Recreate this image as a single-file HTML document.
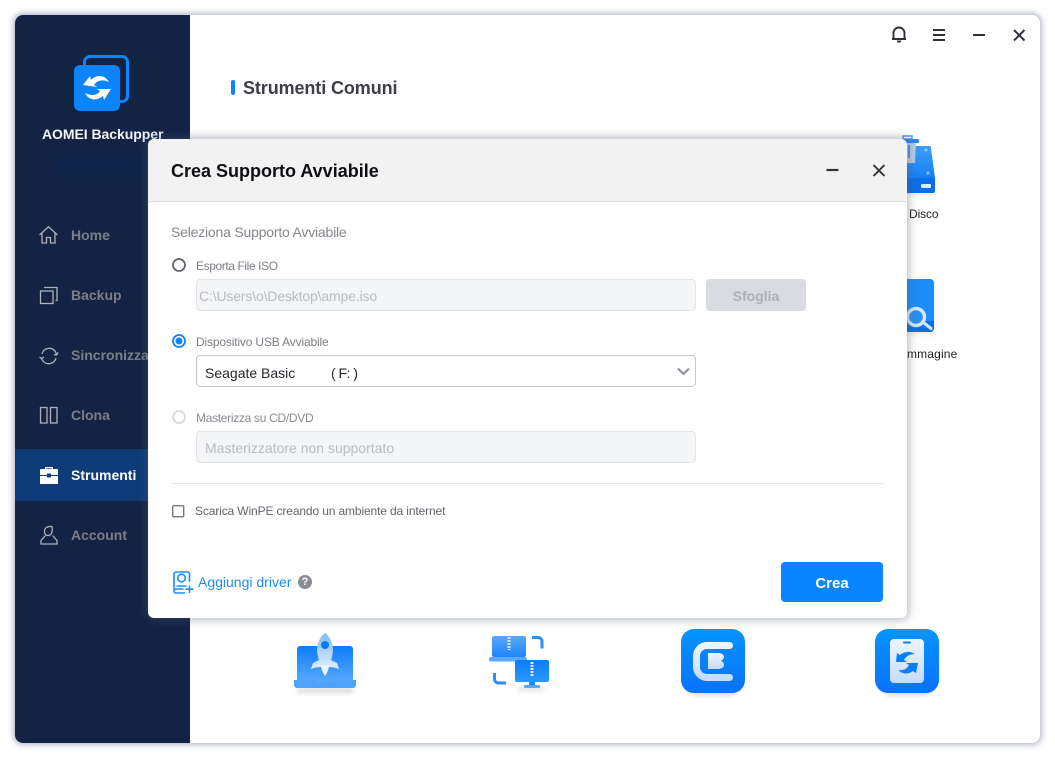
<!DOCTYPE html>
<html lang="it">
<head>
<meta charset="utf-8">
<title>AOMEI Backupper</title>
<style>
html,body{margin:0;padding:0;width:1055px;height:758px;overflow:hidden;background:#fff;font-family:"Liberation Sans","Noto Sans CJK SC",sans-serif}
*{box-sizing:border-box}
.a{position:absolute;white-space:nowrap}
#win{position:absolute;left:15px;top:15px;width:1025px;height:728px;background:#fff;border-radius:8px;box-shadow:0 0 6px 2px rgba(120,130,155,.55);overflow:hidden}
#side{position:absolute;left:15px;top:15px;width:175px;height:728px;background:#132344;border-radius:8px 0 0 8px}
.nav{position:absolute;left:71px;font-size:14px;font-weight:bold;color:#7b8088;line-height:18px}
#act{position:absolute;left:15px;top:449px;width:175px;height:52px;background:#0d3c78}
#dlg{position:absolute;left:148px;top:139px;width:759px;height:479px;background:#fff;border-radius:6px;box-shadow:0 0 9px 2px rgba(80,90,115,.42)}
#dh{position:absolute;left:0;top:0;width:759px;height:63px;background:#f2f2f2;border-bottom:1px solid #dcdcdc;border-radius:6px 6px 0 0}
.lab{font-size:12px;color:#7d7f85;line-height:16px}
.inp{position:absolute;left:196px;width:500px;height:32px;background:#f4f5f6;border:1px solid #e2e4e7;border-radius:4px;font-size:14px;color:#b9bcc2;line-height:32px}
svg{position:absolute;overflow:visible}
</style>
</head>
<body>
<div id="win"></div>
<div id="side"></div>
<div id="act"></div>

<svg style="left:70px;top:52px" width="64" height="62" viewBox="0 0 64 62">
<path d="M14.500 14V10a5.500 5.500 0 0 1 5.500-5.500h32a5.500 5.500 0 0 1 5.500 5.500v34a5.500 5.500 0 0 1-5.500 5.500h-4" fill="none" stroke="#0a84ff" stroke-width="3"/>
<rect x="4" y="13" width="46" height="46" rx="6" fill="#0a84ff"/>
<path d="M13 33L20 24l1 4c6-6 14-5 18 2-6-3-12-2-15 3l3 2z" fill="#fff"/>
<path d="M41 37L34 48l-1-4c-6 5-14 5-18-3 6 3 12 3 15-2l-3-2z" fill="#fff"/>
</svg>
<div class="a" style="left:42px;top:125px;font-size:14px;font-weight:bold;color:#f2f5fa;line-height:18px;letter-spacing:-.05px">AOMEI Backupper</div>
<div class="a" style="left:55px;top:154px;width:90px;height:24px;background:#0f2549;border-radius:12px;filter:blur(3px)"></div>

<svg style="left:39px;top:226px" width="20" height="18" viewBox="0 0 20 18" fill="none" stroke="#aeb2b9" stroke-width="1.300"><path d="M.5 9L9.500 .8 18.500 9M3 7v10h4.500v-5.500h4V17H16V7"/></svg>
<div class="nav" style="top:226px">Home</div>
<svg style="left:39px;top:286px" width="20" height="20" viewBox="0 0 20 20" fill="none" stroke="#aeb2b9" stroke-width="1.300"><rect x="1.500" y="5" width="12.500" height="12.500"/><path d="M5 1.500h13v13h-1.500"/></svg>
<div class="nav" style="top:286px">Backup</div>
<svg style="left:39px;top:346px" width="20" height="20" viewBox="0 0 20 20" fill="none" stroke="#aeb2b9" stroke-width="1.300"><path d="M3 8a7.500 7.500 0 0 1 13-3l1.500 3M17 12a7.500 7.500 0 0 1-13 3l-2-3"/><path d="M0.500 11l2 1.500 2.500-1.500M15 8.500l2.500.5 1.500-2.500"/></svg>
<div class="nav" style="top:346px;width:78px;overflow:hidden">Sincronizza</div>
<svg style="left:39px;top:406px" width="20" height="20" viewBox="0 0 20 20" fill="none" stroke="#aeb2b9" stroke-width="1.300"><rect x="1.500" y="1.500" width="6.500" height="15.500"/><rect x="11.500" y="1.500" width="6.500" height="15.500"/></svg>
<div class="nav" style="top:406px">Clona</div>
<svg style="left:39px;top:466px" width="20" height="18" viewBox="0 0 20 18"><path d="M6 3V1h8v2h-1.500V2.300h-5V3z" fill="#fff"/><path d="M2 3h16a1 1 0 0 1 1 1v5H1V4a1 1 0 0 1 1-1z" fill="#fff"/><rect x="1" y="10" width="18" height="8" fill="#fff"/><rect x="8" y="7.500" width="4" height="4" fill="#0d3c78"/></svg>
<div class="nav" style="top:466px;color:#fff">Strumenti</div>
<svg style="left:39px;top:525px" width="20" height="20" viewBox="0 0 20 20" fill="none" stroke="#aeb2b9" stroke-width="1.300"><path d="M5.500 6.500c0-3.500 2.500-5.500 7.500-5 .8 4.500-.2 8.500-3.500 9-2.500.3-4-1.500-4-4zM6.500 10.500L2 15.500V19h16v-3.500l-4.500-5"/></svg>
<div class="nav" style="top:526px">Account</div>

<div class="a" style="left:231px;top:80px;width:4px;height:15px;background:#0a84ff;border-radius:2px"></div>
<div class="a" style="left:243px;top:77px;font-size:18px;font-weight:bold;color:#3c3f45;line-height:23px;letter-spacing:-.1px">Strumenti Comuni</div>

<svg style="left:890px;top:25px" width="18" height="18" viewBox="0 0 18 18" fill="none" stroke="#2e3238" stroke-width="1.900"><path d="M3.500 13.500V8a5.500 5.500 0 0 1 11 0v5.500M2 14h14"/><path d="M7 16.500h4"/></svg>
<svg style="left:932px;top:28px" width="14" height="14" viewBox="0 0 14 14" stroke="#2e3238" stroke-width="2"><path d="M1 2h12M1 7h12M1 12h12"/></svg>
<svg style="left:973px;top:28px" width="14" height="14" viewBox="0 0 14 14" stroke="#2e3238" stroke-width="2"><path d="M0 7h12"/></svg>
<svg style="left:1012px;top:28px" width="14" height="14" viewBox="0 0 14 14" stroke="#2e3238" stroke-width="2"><path d="M2 2l10.500 10.500M12.500 2L2 12.500"/></svg>

<svg style="left:895px;top:134px" width="45" height="62" viewBox="0 0 45 62">
<defs>
<linearGradient id="gd" x1="0" y1="0" x2="0" y2="1"><stop offset="0" stop-color="#3f9cfa"/><stop offset="1" stop-color="#1681f5"/></linearGradient>
<linearGradient id="g1" x1="0" y1="0" x2="0" y2="1"><stop offset="0" stop-color="#0d7cfb"/><stop offset="1" stop-color="#58a9fb"/></linearGradient>
<linearGradient id="g2" x1="0" y1="0" x2="0" y2="1"><stop offset="0" stop-color="#7db9fb"/><stop offset="1" stop-color="#e1eefc"/></linearGradient>
<linearGradient id="g3" x1="0" y1="0" x2="0" y2="1"><stop offset="0" stop-color="#0694ff"/><stop offset="1" stop-color="#0a72fb"/></linearGradient>
<linearGradient id="g4" x1="0" y1="0" x2="0" y2="1"><stop offset="0" stop-color="#eef5fe"/><stop offset="1" stop-color="#c5dcfb"/></linearGradient>
<linearGradient id="g5" x1="0" y1="0" x2="0" y2="1"><stop offset="0" stop-color="#5aa8fb"/><stop offset="1" stop-color="#1e85f9"/></linearGradient>
<linearGradient id="g6" x1="0" y1="0" x2="0" y2="1"><stop offset="0" stop-color="#0d7cfb"/><stop offset="1" stop-color="#2a98ff"/></linearGradient>
</defs>
<rect x="6" y="50" width="33" height="11" fill="#000" opacity=".07" style="filter:blur(2px)"/>
<path d="M8 12h26a2 2 0 0 1 2 2l4 30H2z" fill="url(#gd)"/>
<circle cx="31" cy="16" r="1.500" fill="#8cc4fb"/><circle cx="33" cy="39" r="1.500" fill="#8cc4fb"/>
<path d="M8 2h9v3H8z" fill="none" stroke="#4d9cf2" stroke-width="1.500"/>
<rect x="5" y="5" width="19" height="4" rx="1" fill="#2f86ee"/>
<path d="M7 9h14l-1 20H9z" fill="#b7cbe6"/>
<rect x="13" y="11" width="2" height="13" fill="#4d93e2"/>
<path d="M0 44h40v13a2 2 0 0 1-2 2H0z" fill="#0a6fe6"/>
<rect x="26" y="50" width="10" height="4" rx="1" fill="#dcebff"/>
</svg>
<div class="a" style="left:909px;top:206px;font-size:12px;color:#222;line-height:16px;letter-spacing:-.1px">Disco</div>

<svg style="left:907px;top:279px" width="30" height="56" viewBox="0 0 30 56">
<rect x="0" y="4" width="27" height="52" fill="#000" opacity=".07" style="filter:blur(2px)"/>
<path d="M0 0h23a4 4 0 0 1 4 4v45a4 4 0 0 1-4 4H0z" fill="#1c8cf8"/>
<path d="M0 42h27v7a4 4 0 0 1-4 4H0z" fill="#0a6fe0"/>
<circle cx="9" cy="38" r="8.500" fill="#2a8ff5" stroke="#d4e6fb" stroke-width="3.500"/>
<path d="M17 44l7 5.500" stroke="#d4e6fb" stroke-width="3.200" stroke-linecap="round"/>
</svg>
<div class="a" style="left:907px;top:346px;font-size:12px;color:#222;line-height:16px;letter-spacing:.15px">mmagine</div>

<svg style="left:292px;top:632px" width="66" height="62" viewBox="0 0 66 62">
<rect x="5" y="56" width="56" height="5" fill="#000" opacity=".14" style="filter:blur(2px)"/>
<rect x="5" y="14" width="56" height="36" rx="3" fill="url(#g1)"/>
<path d="M2 48h21c1 2 2 2 4 2h12c2 0 3 0 4-2h21v5a3 3 0 0 1-3 3H5a3 3 0 0 1-3-3z" fill="#4fa2fa"/>
<path d="M33 1c5 4 8 10 8 17 0 3-1 7-2 10l6 3 2 6c-4-2-9-2-14-2s-10 0-14 2l2-6 6-3c-1-3-2-7-2-10 0-7 3-13 8-17z" fill="url(#g2)"/>
<circle cx="33" cy="13" r="4" fill="#0d7cfb"/>
<path d="M29 33h8c0 4-2 8-4 11-2-3-4-7-4-11z" fill="#eef4fc"/>
</svg>

<svg style="left:488px;top:634px" width="64" height="58" viewBox="0 0 64 58">
<rect x="30" y="52" width="26" height="5" fill="#000" opacity=".1" style="filter:blur(2px)"/>
<rect x="4" y="2" width="34" height="21" rx="2" fill="url(#g5)"/>
<rect x="1" y="23" width="38" height="4.500" rx="2" fill="#5aa8fb"/>
<path d="M21 3v13" stroke="#cfe3fb" stroke-width="3" stroke-dasharray="2 1"/>
<path d="M44 3.500h6a4 4 0 0 1 4 4v7" fill="none" stroke="#2f8df8" stroke-width="3"/>
<path d="M6.500 39v6a4 4 0 0 0 4 4H18" fill="none" stroke="#2f8df8" stroke-width="3"/>
<rect x="27" y="26" width="34" height="22" rx="2" fill="url(#g6)"/>
<rect x="41" y="48" width="6" height="3" fill="#1f85f8"/>
<rect x="36" y="51" width="16" height="3" rx="1" fill="#5aa8fb"/>
<path d="M44 28v15" stroke="#e2eefc" stroke-width="3" stroke-dasharray="2 1"/>
</svg>

<svg style="left:681px;top:629px" width="64" height="68" viewBox="0 0 64 68">
<rect x="4" y="10" width="56" height="57" rx="12" fill="#000" opacity=".12" style="filter:blur(2px)"/>
<rect width="64" height="64" rx="13" fill="url(#g3)"/>
<path d="M48.500 16.500H26a10.500 10.500 0 0 0-10.500 10.500v11A10.500 10.500 0 0 0 26 48.500h22.500" fill="none" stroke="url(#g4)" stroke-width="7" stroke-linecap="round"/>
<path d="M27 24h10c4 0 6 2 6 4 0 2-2 3-3 4 2 1 3 2 3 4 0 2-2 4-6 4H27z" fill="url(#g4)"/>
</svg>

<svg style="left:875px;top:629px" width="64" height="68" viewBox="0 0 64 68">
<rect x="4" y="10" width="56" height="57" rx="12" fill="#000" opacity=".12" style="filter:blur(2px)"/>
<rect width="64" height="64" rx="13" fill="url(#g3)"/>
<rect x="15" y="10" width="34" height="44" rx="4" fill="url(#g4)"/>
<rect x="28" y="12.500" width="8" height="2" rx="1" fill="#0d7cfb"/>
<path d="M21 33l1-9 3 2c5-4 10-4 15-1-5 0-9 2-11 6l3 2zM43 34l-2 10-3-2c-5 4-11 3-15-1 5 1 9-1 11-5l-3-2z" fill="#0d7cfb"/>
</svg>

<div id="dlg">
<div id="dh"></div>
<div class="a" style="left:23px;top:20px;font-size:18px;font-weight:bold;color:#0d0f14;line-height:24px">Crea Supporto Avviabile</div>
<svg style="left:678px;top:25px" width="14" height="14" viewBox="0 0 14 14" stroke="#2e3238" stroke-width="2.200"><path d="M.5 6h12"/></svg>
<svg style="left:724px;top:25px" width="14" height="14" viewBox="0 0 14 14" stroke="#2e3238" stroke-width="1.900"><path d="M1.500 1L12.500 12M12.500 1L1.500 12"/></svg>
</div>

<div class="a" style="left:171px;top:224px;font-size:14px;color:#85878d;line-height:17px;letter-spacing:-.2px">Seleziona Supporto Avviabile</div>

<svg style="left:172px;top:258px" width="15" height="15"><circle cx="7" cy="7" r="6" fill="#fff" stroke="#5d6068" stroke-width="1.700"/></svg>
<div class="a lab" style="left:196px;top:258px;letter-spacing:-.4px">Esporta File ISO</div>
<div class="inp" style="top:279px;padding-left:2px;letter-spacing:-.15px">C:\Users\o\Desktop\ampe.iso</div>
<div class="a" style="left:706px;top:279px;width:100px;height:32px;background:#d8dce1;border-radius:4px;text-align:center;font-size:14px;font-weight:bold;color:#acb0b6;line-height:34px">Sfoglia</div>

<svg style="left:172px;top:334px" width="15" height="15"><circle cx="7" cy="7" r="6" fill="#fff" stroke="#0a84ff" stroke-width="1.700"/><circle cx="7" cy="7" r="3.500" fill="#0a84ff"/></svg>
<div class="a lab" style="left:196px;top:334px;letter-spacing:-.16px">Dispositivo USB Avviabile</div>
<div class="inp" style="top:355px;background:#fff;border-color:#c4c7cc;color:#26282d;padding-left:8px;line-height:34px">Seagate Basic<span style="position:absolute;left:134px;letter-spacing:-.5px">( F: )</span></div>
<svg style="left:677px;top:367px" width="13" height="9" viewBox="0 0 13 9" fill="none" stroke="#8a8e95" stroke-width="2"><path d="M1 1.500l5.500 5.500L12 1.500"/></svg>

<svg style="left:172px;top:410px" width="15" height="15"><circle cx="7" cy="7" r="6" fill="#fff" stroke="#d6d8dc" stroke-width="1.700"/></svg>
<div class="a lab" style="left:196px;top:410px;color:#8a8c92;letter-spacing:-.3px">Masterizza su CD/DVD</div>
<div class="inp" style="top:431px;padding-left:8px">Masterizzatore non supportato</div>

<div class="a" style="left:171px;top:483px;width:712px;height:1px;background:#e6e7e9"></div>

<svg style="left:172px;top:505px" width="13" height="13"><rect x=".75" y=".75" width="11" height="11" rx="1" fill="#fff" stroke="#6a6d74" stroke-width="1.300"/></svg>
<div class="a lab" style="left:195px;top:503px;color:#62656b;letter-spacing:-.13px">Scarica WinPE creando un ambiente da internet</div>

<svg style="left:173px;top:571px" width="21" height="23" viewBox="0 0 21 23" fill="none" stroke="#1a8cff" stroke-width="1.600"><path d="M16.500 11V3a2 2 0 0 0-2-2H3a2 2 0 0 0-2 2v17a2 2 0 0 0 2 2h9"/><circle cx="8.500" cy="7" r="3.800"/><path d="M3.500 15h10M1.500 18.500c1-.5 2-.5 3-.5h6M16.500 14.500v7.500M12.500 18.200h8"/></svg>
<div class="a" style="left:198px;top:574px;font-size:14px;color:#1a8cff;line-height:17px">Aggiungi driver</div>
<div class="a" style="left:298px;top:575px;width:14px;height:14px;border-radius:50%;background:#8a8d94;color:#fff;font-size:11px;font-weight:bold;line-height:14px;text-align:center">?</div>

<div class="a" style="left:781px;top:562px;width:102px;height:40px;background:#0a84ff;border-radius:4px;color:#fff;font-size:15px;font-weight:bold;line-height:43px;text-align:center">Crea</div>
</body>
</html>
